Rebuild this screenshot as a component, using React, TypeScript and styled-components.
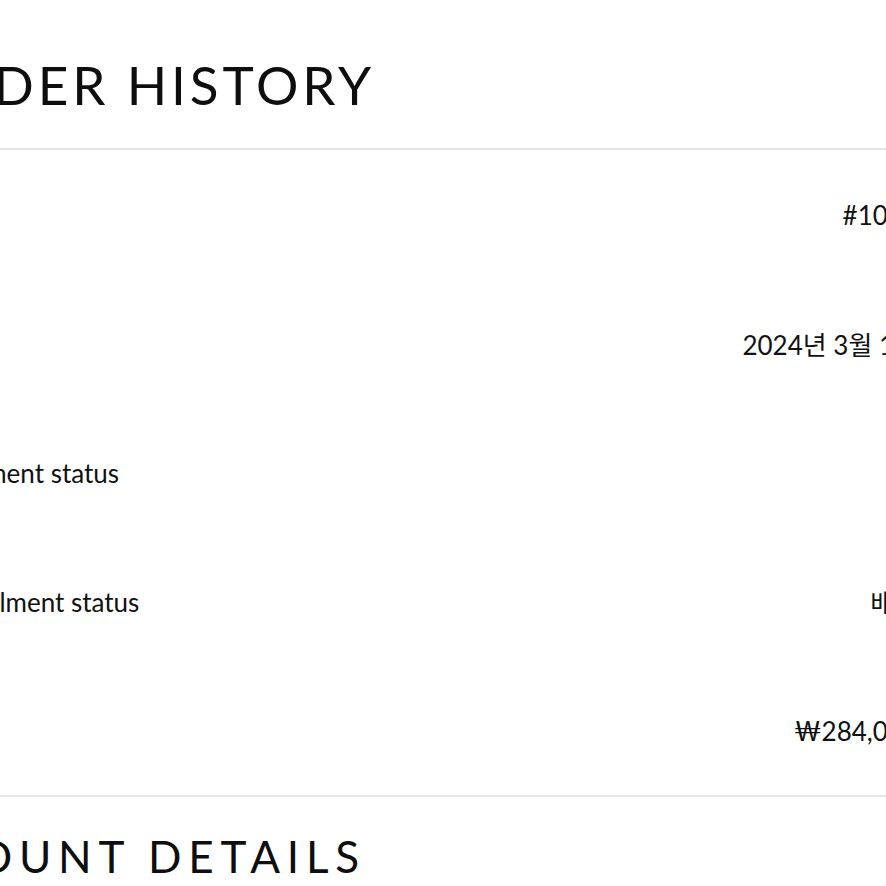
import styled, {createGlobalStyle} from 'styled-components';

const GlobalStyle = createGlobalStyle`
    html, body {
        margin: 0;
        padding: 0;
        background: #ffffff;
        overflow: hidden;
    }
    body {
        font-family: Lato, "Noto Sans CJK KR", sans-serif;
        color: #111111;
    }
`;

const Page = styled.div`
    width: 1012px;
    margin-left: -94px;
`;

const SectionTitle = styled.h1<{size: number; spacing: number}>`
    margin: 0;
    font-family: Lato, "Noto Sans CJK KR", sans-serif;
    font-weight: 400;
    font-size: ${(p) => p.size}px;
    letter-spacing: ${(p) => p.spacing}px;
    line-height: 1;
    color: #0e0e0e;
    white-space: nowrap;
`;

const TitleBar = styled.div`
    height: 148px;
    display: flex;
    align-items: flex-end;
    box-sizing: border-box;
    padding-bottom: 37px;
    padding-left: 4px;
`;

const BottomTitleBar = styled.div`
    padding-top: 37px;
    margin-left: -36px;
`;

const Divider = styled.hr`
    margin: 0;
    border: none;
    height: 2px;
    background: #e6e6e6;
`;

const Rows = styled.div`
    display: flex;
    flex-direction: column;
`;

const Row = styled.div`
    height: 129px;
    display: flex;
    align-items: center;
    justify-content: space-between;
    padding-left: 38px;
    font-size: 26px;
`;

const Label = styled.span`
    font-family: Lato, "Noto Sans CJK KR", sans-serif;
`;

const Value = styled.span`
    font-family: Lato, "Noto Sans CJK KR", sans-serif;
    text-align: right;
    white-space: nowrap;
`;

const rows = [
    {label: 'No.', value: '#1001'},
    {label: 'Date', value: '2024년 3월 1일'},
    {label: 'Payment status', value: ''},
    {label: 'Fulfillment status', value: '배송'},
    {label: 'Total', value: '₩284,000'},
];

export default function App() {
    return (
        <>
            <GlobalStyle />
            <Page>
                <TitleBar>
                    <SectionTitle size={53} spacing={3.9}>ORDER HISTORY</SectionTitle>
                </TitleBar>
                <Divider />
                <Rows>
                    {rows.map((r) => (
                        <Row key={r.label}>
                            <Label>{r.label}</Label>
                            <Value>{r.value}</Value>
                        </Row>
                    ))}
                </Rows>
                <Divider />
                <BottomTitleBar>
                    <SectionTitle size={44} spacing={6.8}>ACCOUNT DETAILS</SectionTitle>
                </BottomTitleBar>
            </Page>
        </>
    );
}
